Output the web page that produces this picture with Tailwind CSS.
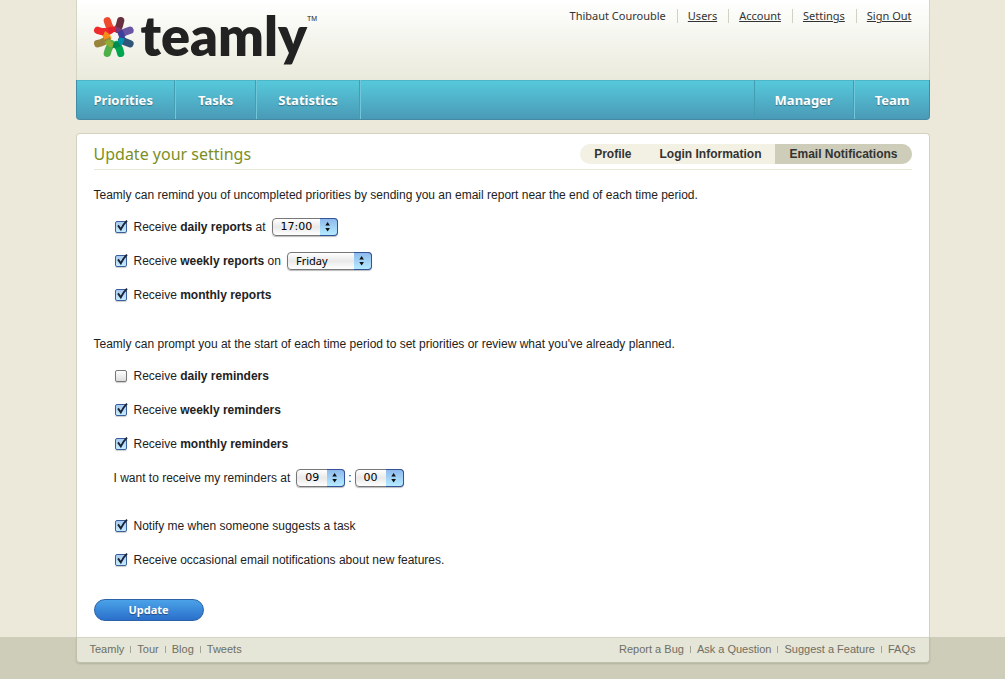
<!DOCTYPE html>
<html lang="en">
<head>
<meta charset="utf-8">
<meta name="viewport" content="width=device-width, initial-scale=1">
<title>Teamly - Update your settings</title>
<script src="https://cdn.jsdelivr.net/npm/@tailwindcss/browser@4"></script>
</head>
<body class="flex min-h-screen flex-col bg-[#ece9da] font-['Liberation_Sans',Arial,sans-serif] text-xs text-[#222]">

<!-- Shared icons -->
<svg class="hidden" aria-hidden="true">
  <symbol id="tick" viewBox="0 0 16 16"><path d="M4 6.4 L6.8 10.4 Q9 5.5 13 1.6" fill="none" stroke="#1b2434" stroke-width="1.9"/></symbol>
  <symbol id="arrows" viewBox="0 0 18 18"><path d="M8 3.4 L10.6 7.4 H5.4 Z M8 14 L10.6 10 H5.4 Z" fill="#111"/></symbol>
</svg>

<div class="mx-auto flex w-full max-w-[854px] flex-1 flex-col">
  <header>
    <div class="flex h-20 items-start justify-between border-x border-[#d5d5c3] bg-linear-to-b from-white to-[#eaeadc] pl-4 pr-[17px]">
      <a href="#" class="flex items-start" aria-label="teamly">
        <svg class="mt-4 h-[42px] w-[42px]" viewBox="0 0 126 126" fill="none" stroke-width="22" stroke-linecap="round" aria-hidden="true">
          <path stroke="#f9b21c" d="M35 50 L44 66"/>
          <path stroke="#98843c" d="M14 83 Q34 78 42 70"/>
          <path stroke="#4fb04a" d="M43 112 Q48 92 56 84"/>
          <path stroke="#00a64f" d="M83 112 Q80 94 70 86"/>
          <path stroke="#2f5579" d="M111 83 Q94 78 86 72"/>
          <path stroke="#6a55a3" d="M111 43 Q94 48 86 54"/>
          <path stroke="#6b3040" d="M83 14 Q80 30 74 40"/>
          <path stroke="#ef4a2e" d="M43 14 Q48 32 54 40"/>
          <path stroke="#ee2a2c" d="M14 43 Q36 51 50 44"/>
          <g stroke-width="16" stroke-linecap="butt">
            <path stroke="#e3202c" d="M46 45 Q58 39 70 39"/>
            <path stroke="#7c3a78" d="M68 39 Q78 42 84 49"/>
            <path stroke="#3c3f9c" d="M81 45 Q89 56 87 68"/>
            <path stroke="#0094a8" d="M87 66 Q85 78 77 85"/>
            <path stroke="#008a50" d="M79 83 Q68 90 58 87"/>
            <path stroke="#8fae35" d="M60 88 Q48 85 41 74"/>
            <path stroke="#f58a1f" d="M41 68 Q37 58 43 50"/>
          </g>
        </svg>
        <span class="ml-1.5 mt-1 font-['Lato',sans-serif] text-[54px] leading-[64px] font-extrabold text-[#222]">teamly</span>
        <span class="mt-[15px] text-[7px] leading-2">TM</span>
      </a>
      <ul class="mt-[9px] flex font-['Noto_Sans',sans-serif] text-[11px] leading-[14px] text-[#333]">
        <li class="pr-[11px]">Thibaut Courouble</li>
        <li class="border-l border-[#d2d2c0] pl-2.5 pr-[11px]"><a href="#" class="underline">Users</a></li>
        <li class="border-l border-[#d2d2c0] pl-2.5 pr-[11px]"><a href="#" class="underline">Account</a></li>
        <li class="border-l border-[#d2d2c0] pl-2.5 pr-[11px]"><a href="#" class="underline">Settings</a></li>
        <li class="border-l border-[#d2d2c0] pl-2.5"><a href="#" class="underline">Sign Out</a></li>
      </ul>
    </div>
    <nav class="flex h-10 rounded-b border-x border-b border-[#438ba5] bg-linear-to-b from-[#56cadc] to-[#4a9ab7] font-['Noto_Sans',sans-serif] text-[13px] leading-10 font-bold text-white shadow-[inset_0_1px_0_#4db5c6] text-shadow-[0_1px_1px_#00000055]">
      <a href="#" class="border-r border-[#459db2] pl-[17px] pr-[21px]">Priorities</a>
      <a href="#" class="border-r border-l border-r-[#459db2] border-l-[#71c6d7] px-[22px]">Tasks</a>
      <a href="#" class="border-r border-l border-r-[#459db2] border-l-[#71c6d7] px-[21px]">Statistics</a>
      <span class="flex-1 border-l border-[#71c6d7]"></span>
      <a href="#" class="border-r border-l border-[#459db2] px-5">Manager</a>
      <a href="#" class="border-l border-[#71c6d7] pl-5 pr-[19px]">Team</a>
    </nav>
  </header>

  <main class="mt-[13px] flex-1 rounded-t border-x border-t border-[#d2d2c0] bg-white px-[17px]">
    <div class="flex h-9 items-center justify-between border-b border-[#e8e8d6] pt-1">
      <h1 class="font-['Noto_Sans',sans-serif] text-[16px] leading-6 text-[#7c8f1f]">Update your settings</h1>
      <div class="flex overflow-hidden rounded-full bg-[#f3f1e4] leading-5 font-bold text-[#333]">
        <a href="#" class="px-3.5">Profile</a>
        <a href="#" class="px-3.5">Login Information</a>
        <a href="#" class="bg-[#cdcdb9] px-3.5">Email Notifications</a>
      </div>
    </div>

    <form class="pt-2.5 pb-4">
      <p class="leading-[30px]">Teamly can remind you of uncompleted priorities by sending you an email report near the end of each time period.</p>
      <div class="pl-5">
        <div class="flex h-[34px] items-center gap-1.5">
          <span class="relative flex"><input id="daily-rep" type="checkbox" checked class="peer m-px h-3 w-3 appearance-none rounded-[2px] border border-[#777] bg-linear-to-b from-white to-[#ddd] shadow-[0_1px_1px_#0003] checked:border-[#3b5f9c] checked:from-[#a9cbf0] checked:to-[#c4ecff]"><svg class="pointer-events-none absolute -top-px left-0 hidden h-4 w-4 peer-checked:block"><use href="#tick"/></svg></span>
          <label for="daily-rep">Receive <b>daily reports</b> at</label>
          <span class="relative flex"><select aria-label="Daily report time" class="h-[18px] w-[66px] appearance-none rounded border border-[#777] bg-linear-to-b from-white via-[#e9e9e9] to-white pl-2 font-['DejaVu_Sans',sans-serif] text-[11px] leading-4 text-black shadow-[0_1px_1px_#0004]"><option>17:00</option></select><svg class="pointer-events-none absolute right-0 top-0 h-[18px] w-[18px] rounded-r border border-l-0 border-[#34549a] bg-linear-to-b from-[#8fb9ec] to-[#b5ebff]"><use href="#arrows"/></svg></span>
        </div>
        <div class="flex h-[34px] items-center gap-1.5">
          <span class="relative flex"><input id="weekly-rep" type="checkbox" checked class="peer m-px h-3 w-3 appearance-none rounded-[2px] border border-[#777] bg-linear-to-b from-white to-[#ddd] shadow-[0_1px_1px_#0003] checked:border-[#3b5f9c] checked:from-[#a9cbf0] checked:to-[#c4ecff]"><svg class="pointer-events-none absolute -top-px left-0 hidden h-4 w-4 peer-checked:block"><use href="#tick"/></svg></span>
          <label for="weekly-rep">Receive <b>weekly reports</b> on</label>
          <span class="relative flex"><select aria-label="Weekly report day" class="h-[18px] w-[85px] appearance-none rounded border border-[#777] bg-linear-to-b from-white via-[#e9e9e9] to-white pl-2 font-['Noto_Sans',sans-serif] text-[11px] leading-4 text-black shadow-[0_1px_1px_#0004]"><option>Friday</option></select><svg class="pointer-events-none absolute right-0 top-0 h-[18px] w-[18px] rounded-r border border-l-0 border-[#34549a] bg-linear-to-b from-[#8fb9ec] to-[#b5ebff]"><use href="#arrows"/></svg></span>
        </div>
        <div class="flex h-[34px] items-center gap-1.5">
          <span class="relative flex"><input id="monthly-rep" type="checkbox" checked class="peer m-px h-3 w-3 appearance-none rounded-[2px] border border-[#777] bg-linear-to-b from-white to-[#ddd] shadow-[0_1px_1px_#0003] checked:border-[#3b5f9c] checked:from-[#a9cbf0] checked:to-[#c4ecff]"><svg class="pointer-events-none absolute -top-px left-0 hidden h-4 w-4 peer-checked:block"><use href="#tick"/></svg></span>
          <label for="monthly-rep">Receive <b>monthly reports</b></label>
        </div>
      </div>

      <p class="mt-[17px] leading-[30px]">Teamly can prompt you at the start of each time period to set priorities or review what you've already planned.</p>
      <div class="pl-5">
        <div class="flex h-[34px] items-center gap-1.5">
          <span class="relative flex"><input id="daily-rem" type="checkbox" class="peer m-px h-3 w-3 appearance-none rounded-[2px] border border-[#777] bg-linear-to-b from-white to-[#ddd] shadow-[0_1px_1px_#0003] checked:border-[#3b5f9c] checked:from-[#a9cbf0] checked:to-[#c4ecff]"><svg class="pointer-events-none absolute -top-px left-0 hidden h-4 w-4 peer-checked:block"><use href="#tick"/></svg></span>
          <label for="daily-rem">Receive <b>daily reminders</b></label>
        </div>
        <div class="flex h-[34px] items-center gap-1.5">
          <span class="relative flex"><input id="weekly-rem" type="checkbox" checked class="peer m-px h-3 w-3 appearance-none rounded-[2px] border border-[#777] bg-linear-to-b from-white to-[#ddd] shadow-[0_1px_1px_#0003] checked:border-[#3b5f9c] checked:from-[#a9cbf0] checked:to-[#c4ecff]"><svg class="pointer-events-none absolute -top-px left-0 hidden h-4 w-4 peer-checked:block"><use href="#tick"/></svg></span>
          <label for="weekly-rem">Receive <b>weekly reminders</b></label>
        </div>
        <div class="flex h-[34px] items-center gap-1.5">
          <span class="relative flex"><input id="monthly-rem" type="checkbox" checked class="peer m-px h-3 w-3 appearance-none rounded-[2px] border border-[#777] bg-linear-to-b from-white to-[#ddd] shadow-[0_1px_1px_#0003] checked:border-[#3b5f9c] checked:from-[#a9cbf0] checked:to-[#c4ecff]"><svg class="pointer-events-none absolute -top-px left-0 hidden h-4 w-4 peer-checked:block"><use href="#tick"/></svg></span>
          <label for="monthly-rem">Receive <b>monthly reminders</b></label>
        </div>
        <div class="flex h-[34px] items-center">
          <label for="rem-hour" class="mr-1.5">I want to receive my reminders at</label>
          <span class="relative flex"><select id="rem-hour" class="h-[18px] w-[49px] appearance-none rounded border border-[#777] bg-linear-to-b from-white via-[#e9e9e9] to-white pl-2 font-['DejaVu_Sans',sans-serif] text-[11px] leading-4 text-black shadow-[0_1px_1px_#0004]"><option>09</option></select><svg class="pointer-events-none absolute right-0 top-0 h-[18px] w-[18px] rounded-r border border-l-0 border-[#34549a] bg-linear-to-b from-[#8fb9ec] to-[#b5ebff]"><use href="#arrows"/></svg></span>
          <span class="px-[3px]">:</span>
          <span class="relative flex"><select aria-label="Reminder minutes" class="h-[18px] w-[49px] appearance-none rounded border border-[#777] bg-linear-to-b from-white via-[#e9e9e9] to-white pl-2 font-['DejaVu_Sans',sans-serif] text-[11px] leading-4 text-black shadow-[0_1px_1px_#0004]"><option>00</option></select><svg class="pointer-events-none absolute right-0 top-0 h-[18px] w-[18px] rounded-r border border-l-0 border-[#34549a] bg-linear-to-b from-[#8fb9ec] to-[#b5ebff]"><use href="#arrows"/></svg></span>
        </div>
        <div class="mt-3.5 flex h-[34px] items-center gap-1.5">
          <span class="relative flex"><input id="suggest" type="checkbox" checked class="peer m-px h-3 w-3 appearance-none rounded-[2px] border border-[#777] bg-linear-to-b from-white to-[#ddd] shadow-[0_1px_1px_#0003] checked:border-[#3b5f9c] checked:from-[#a9cbf0] checked:to-[#c4ecff]"><svg class="pointer-events-none absolute -top-px left-0 hidden h-4 w-4 peer-checked:block"><use href="#tick"/></svg></span>
          <label for="suggest">Notify me when someone suggests a task</label>
        </div>
        <div class="flex h-[34px] items-center gap-1.5">
          <span class="relative flex"><input id="features" type="checkbox" checked class="peer m-px h-3 w-3 appearance-none rounded-[2px] border border-[#777] bg-linear-to-b from-white to-[#ddd] shadow-[0_1px_1px_#0003] checked:border-[#3b5f9c] checked:from-[#a9cbf0] checked:to-[#c4ecff]"><svg class="pointer-events-none absolute -top-px left-0 hidden h-4 w-4 peer-checked:block"><use href="#tick"/></svg></span>
          <label for="features">Receive occasional email notifications about new features.</label>
        </div>
      </div>
      <button type="submit" class="mt-[22px] block h-[22px] w-[110px] rounded-full border border-[#2c62a6] bg-linear-to-b from-[#4ba3e8] to-[#2b6fcb] font-['Noto_Sans',sans-serif] text-[11px] leading-5 font-bold text-white text-shadow-[0_1px_1px_#0006]">Update</button>
    </form>
  </main>
</div>

<footer class="bg-[#cdcdb9] pb-4">
  <div class="mx-auto flex h-[26px] w-full max-w-[854px] items-center justify-between rounded-b border border-[#c1c1ab] border-t-[#d4d4c5] bg-[#e5e5d8] px-[13px] pb-px text-[11px] text-[#6f6f62] shadow-[0_1px_2px_#0002]">
    <ul class="flex gap-1.5">
      <li><a href="#">Teamly</a></li><li class="my-1 w-px bg-[#a3a396]"></li>
      <li><a href="#">Tour</a></li><li class="my-1 w-px bg-[#a3a396]"></li>
      <li><a href="#">Blog</a></li><li class="my-1 w-px bg-[#a3a396]"></li>
      <li><a href="#">Tweets</a></li>
    </ul>
    <ul class="flex gap-1.5">
      <li><a href="#">Report a Bug</a></li><li class="my-1 w-px bg-[#a3a396]"></li>
      <li><a href="#">Ask a Question</a></li><li class="my-1 w-px bg-[#a3a396]"></li>
      <li><a href="#">Suggest a Feature</a></li><li class="my-1 w-px bg-[#a3a396]"></li>
      <li><a href="#">FAQs</a></li>
    </ul>
  </div>
</footer>
</body>
</html>
